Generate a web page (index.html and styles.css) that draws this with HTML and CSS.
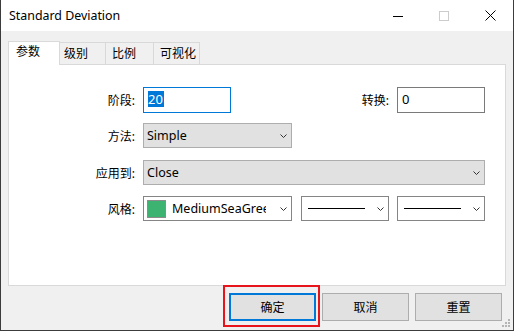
FILE: index.html
```html
<!DOCTYPE html>
<html lang="zh-CN">
<head>
    <meta charset="UTF-8">
    <title>Standard Deviation</title>
    <link rel="stylesheet" href="styles.css">
</head>
<body>
    <div class="window">
        <div class="titlebar">
            <span class="title">Standard Deviation</span>
            <div class="caption">
                <span class="cap-btn">
                    <svg width="10" height="10"><line x1="0" y1="5.5" x2="10" y2="5.5" stroke="#000" stroke-width="1"/></svg>
                </span>
                <span class="cap-btn">
                    <svg width="10" height="10"><rect x="0.5" y="0.5" width="9" height="9" fill="none" stroke="#cccccc" stroke-width="1"/></svg>
                </span>
                <span class="cap-btn">
                    <svg width="11" height="11"><path d="M0.5 0.5 L10.5 10.5 M10.5 0.5 L0.5 10.5" stroke="#000" stroke-width="1" fill="none"/></svg>
                </span>
            </div>
        </div>

        <div class="client">
            <div class="tabs">
                <div class="tab tab-active">参数</div>
                <div class="tab tab-levels">级别</div>
                <div class="tab tab-scale">比例</div>
                <div class="tab tab-visual">可视化</div>
            </div>

            <div class="panel">
                <div class="row row-first">
                    <span class="label">阶段:</span>
                    <div class="edit edit-focus"><span class="sel">20</span></div>
                    <span class="label label-fill">转换:</span>
                    <div class="edit">0</div>
                </div>
                <div class="row row-method">
                    <span class="label">方法:</span>
                    <div class="combo combo-mid">
                        <span>Simple</span>
                        <svg class="arrow" width="7" height="4"><polyline points="0.5,0.5 3.5,3.5 6.5,0.5" fill="none" stroke="#333" stroke-width="1"/></svg>
                    </div>
                </div>
                <div class="row row-apply">
                    <span class="label">应用到:</span>
                    <div class="combo combo-fill">
                        <span>Close</span>
                        <svg class="arrow" width="7" height="4"><polyline points="0.5,0.5 3.5,3.5 6.5,0.5" fill="none" stroke="#333" stroke-width="1"/></svg>
                    </div>
                </div>
                <div class="row row-style">
                    <span class="label">风格:</span>
                    <div class="combo combo-white combo-mid">
                        <span class="swatch"></span>
                        <span class="color-name">MediumSeaGreen</span>
                        <svg class="arrow" width="7" height="4"><polyline points="0.5,0.5 3.5,3.5 6.5,0.5" fill="none" stroke="#333" stroke-width="1"/></svg>
                    </div>
                    <div class="combo combo-white combo-small combo-gap1">
                        <span class="line-sample"></span>
                        <svg class="arrow" width="7" height="4"><polyline points="0.5,0.5 3.5,3.5 6.5,0.5" fill="none" stroke="#333" stroke-width="1"/></svg>
                    </div>
                    <div class="combo combo-white combo-small combo-gap2">
                        <span class="line-sample"></span>
                        <svg class="arrow" width="7" height="4"><polyline points="0.5,0.5 3.5,3.5 6.5,0.5" fill="none" stroke="#333" stroke-width="1"/></svg>
                    </div>
                </div>
            </div>

            <div class="buttons">
                <div class="btn btn-default">确定<span class="mark"></span></div>
                <div class="btn">取消</div>
                <div class="btn">重置</div>
            </div>
        </div>

        <svg class="grip" width="9" height="9">
            <rect x="6" y="0" width="2" height="2" fill="#b4b4b4"/>
            <rect x="3" y="3" width="2" height="2" fill="#b4b4b4"/>
            <rect x="6" y="3" width="2" height="2" fill="#b4b4b4"/>
            <rect x="0" y="6" width="2" height="2" fill="#b4b4b4"/>
            <rect x="3" y="6" width="2" height="2" fill="#b4b4b4"/>
            <rect x="6" y="6" width="2" height="2" fill="#b4b4b4"/>
        </svg>
    </div>
</body>
</html>
```

FILE: styles.css
```css
body{
    margin: 0;
    font-family: "Noto Sans", "Noto Sans CJK SC", sans-serif;
    font-size: 12px;
    color: #000;
}

.window{
    position: relative;
    width: 514px;
    height: 331px;
    box-sizing: border-box;
    border: 1px solid #3c3c3c;
    border-top: none;
    display: flex;
    flex-direction: column;
    background: #fff;
}

/* title bar */
.titlebar{
    height: 31px;
    display: flex;
    align-items: center;
    background: #fff;
}

.title{
    padding-left: 8px;
    font-size: 12.4px;
    line-height: 31px;
}

.caption{
    margin-left: auto;
    display: flex;
    height: 31px;
}

.cap-btn{
    width: 46px;
    height: 31px;
    display: flex;
    align-items: center;
    justify-content: center;
}

/* client area */
.client{
    flex: 1;
    background: #f0f0f0;
    padding: 0 7px;
    display: flex;
    flex-direction: column;
}

.tabs{
    height: 34px;
    box-sizing: border-box;
    padding-top: 10px;
    border-bottom: 1px solid #d9d9d9;
    display: flex;
    align-items: flex-end;
}

.tab{
    box-sizing: border-box;
    height: 22px;
    border-top: 1px solid #d9d9d9;
    border-right: 1px solid #d9d9d9;
    line-height: 21px;
    background: #f0f0f0;
    white-space: nowrap;
}

.tab-active{
    height: 24px;
    width: 52px;
    margin-bottom: -1px;
    border-left: 1px solid #d9d9d9;
    background: #fff;
    line-height: 19px;
    padding-left: 7px;
}

.tab-levels{
    width: 46px;
    padding-left: 4px;
}

.tab-scale{
    width: 48px;
    padding-left: 6px;
}

.tab-visual{
    width: 46px;
    padding-left: 6px;
}

.panel{
    height: 221px;
    box-sizing: border-box;
    background: #fff;
    border: 1px solid #d9d9d9;
    border-top: none;
    padding: 22px 20px 0 0;
}

.row{
    display: flex;
    align-items: center;
    height: 25px;
}

.row-first{
    height: 26px;
}

.row-method{
    margin-top: 10px;
}

.row-apply{
    margin-top: 12px;
}

.row-style{
    margin-top: 11px;
}

.label{
    width: 126px;
    margin-right: 8px;
    text-align: right;
    flex-shrink: 0;
}

.label-fill{
    width: auto;
    flex: 1;
}

.edit{
    box-sizing: border-box;
    width: 88px;
    height: 26px;
    border: 1px solid #7a7a7a;
    background: #fff;
    padding-left: 4px;
    font-size: 13px;
    line-height: 22px;
}

.edit-focus{
    border-color: #0078d7;
}

.sel{
    display: inline-block;
    background: #0078d7;
    color: #fff;
    line-height: 16px;
    padding: 0 1px 0 0;
}

.combo{
    box-sizing: border-box;
    height: 25px;
    display: flex;
    align-items: center;
    background: #e1e1e1;
    border: 1px solid #adadad;
    padding-left: 3px;
    font-size: 12.5px;
}

.combo-mid{
    width: 149px;
}

.combo-fill{
    flex: 1;
}

.combo-white{
    background: #fff;
    border-color: #858585;
}

.combo-small{
    width: 88px;
    padding-left: 6px;
}

.combo-gap1{
    margin-left: 9px;
}

.combo-gap2{
    margin-left: 8px;
}

.arrow{
    margin-left: auto;
    margin-right: 4px;
    flex-shrink: 0;
}

.swatch{
    box-sizing: border-box;
    width: 19px;
    height: 18px;
    border: 1px solid #8c8c8c;
    background: #3cb371;
    margin-right: 6px;
    flex-shrink: 0;
}

.color-name{
    width: 94px;
    overflow: hidden;
    white-space: nowrap;
}

.line-sample{
    width: 57px;
    height: 1px;
    background: #000;
}

/* bottom buttons */
.buttons{
    flex: 1;
    display: flex;
    justify-content: flex-end;
    align-items: flex-start;
    gap: 6px;
    padding: 7px 4px 0 0;
}

.btn{
    position: relative;
    box-sizing: border-box;
    width: 87px;
    height: 28px;
    background: #e1e1e1;
    border: 1px solid #adadad;
    display: flex;
    align-items: center;
    justify-content: center;
}

.btn-default{
    border: 2px solid #0078d7;
}

.mark{
    position: absolute;
    left: -8px;
    top: -10px;
    width: 97px;
    height: 42px;
    box-sizing: border-box;
    border: 2px solid #e8141c;
}

.grip{
    position: absolute;
    right: 2px;
    bottom: 2px;
}
```
